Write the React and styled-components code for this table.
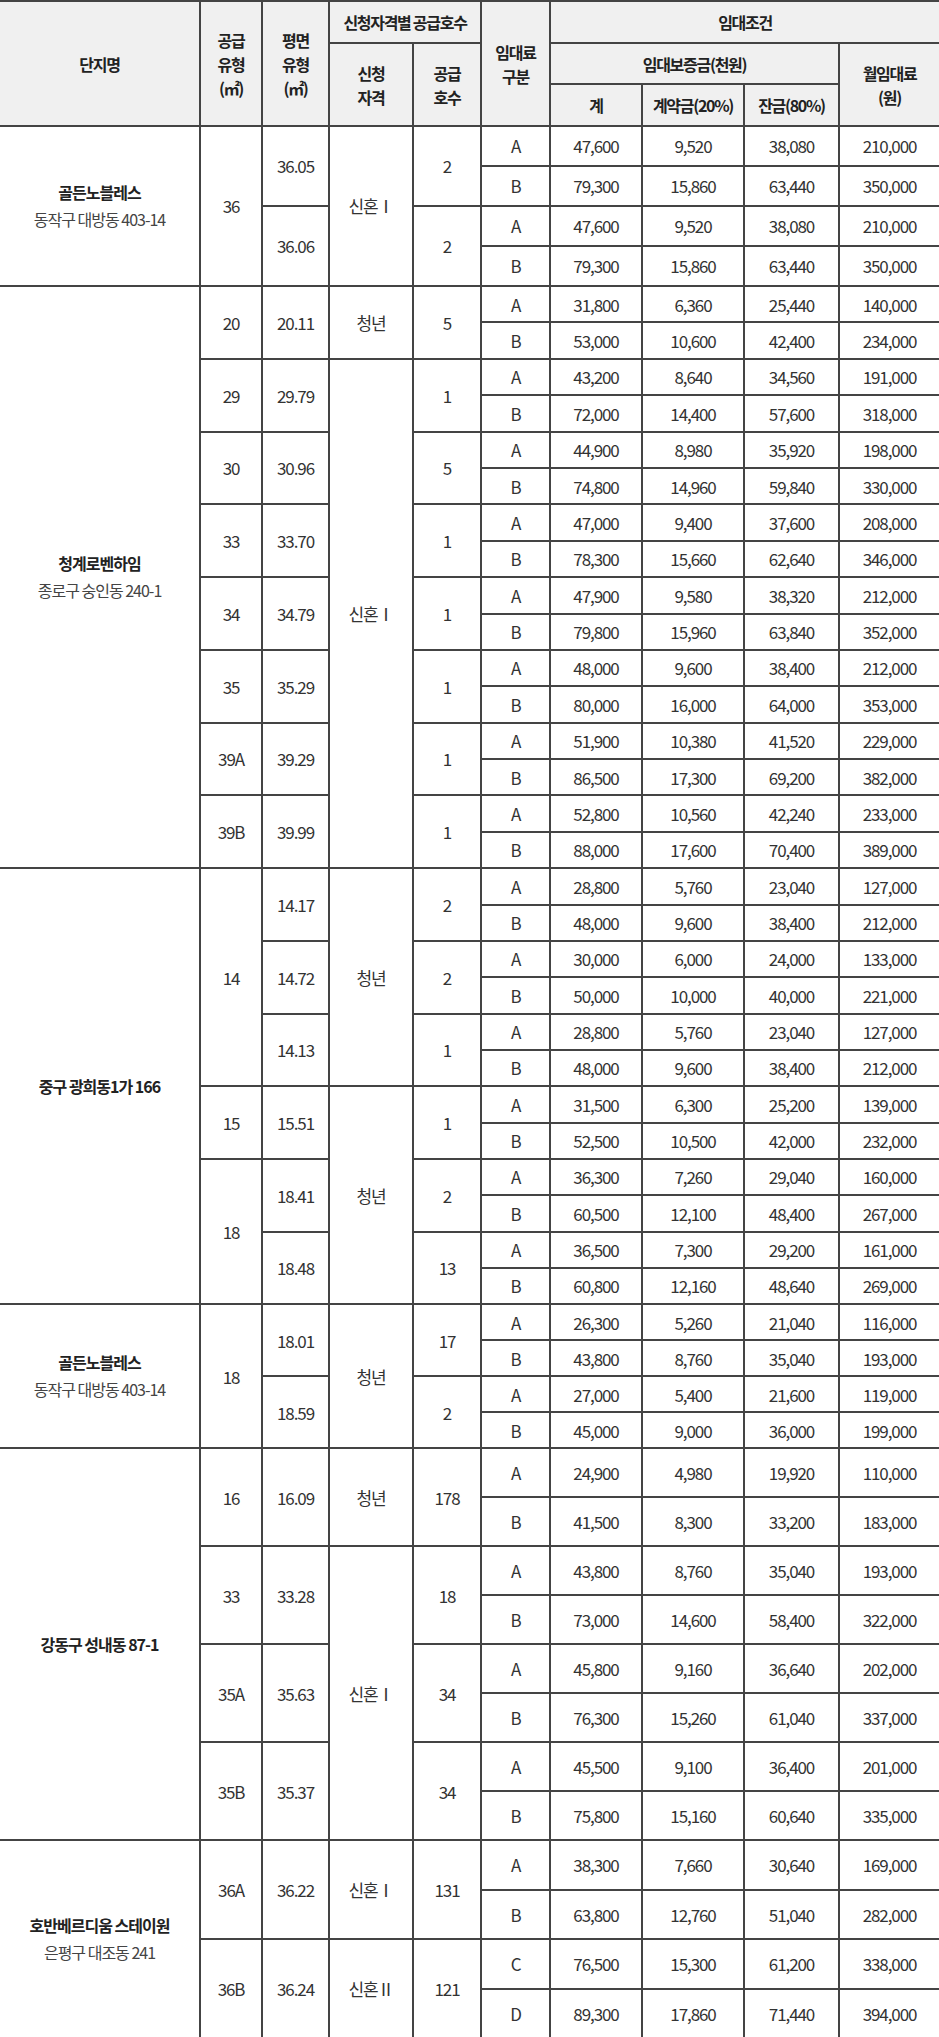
import React from 'react';
import styled, { createGlobalStyle } from 'styled-components';

const GlobalStyle = createGlobalStyle`
  body {
    margin: 0;
    background: #fff;
    font-family: "Noto Sans CJK KR", "Noto Sans", sans-serif;
  }
`;

const Table = styled.table`
  width: 939px;
  border-collapse: collapse;
  table-layout: fixed;
  color: #333;
  font-size: 17px;
  letter-spacing: -1.1px;
`;

const Row = styled.tr`
  height: ${p => p.$h}px;
`;

const Th = styled.th`
  background: #f0f0f0;
  border: 2px solid #444;
  ${p => p.$first && 'border-left: none;'}
  ${p => p.$last && 'border-right: none;'}
  padding: 0;
  font-size: 16px;
  font-weight: 700;
  line-height: 24px;
  letter-spacing: -1.3px;
  color: #222;
  text-align: center;
  vertical-align: middle;
`;

const Td = styled.td`
  border: 2px solid #444;
  ${p => p.$first && 'border-left: none;'}
  ${p => p.$last && 'border-right: none;'}
  padding: 0;
  text-align: center;
  vertical-align: middle;
  line-height: 1.25;
  white-space: nowrap;
`;

const Name = styled.div`
  font-weight: 700;
  font-size: 16px;
  color: #222;
  letter-spacing: -1px;
  line-height: 27px;
`;

const Addr = styled.div`
  font-size: 16px;
  color: #444;
  letter-spacing: -1px;
  line-height: 27px;
`;

const widths = [200, 62, 67, 84, 68, 69, 92, 102, 95, 100];

const r = (g, a, b, c, d) => [g, a, b, c, d];

const blocks = [
  {
    name: '골든노블레스', addr: '동작구 대방동 403-14', h: 40,
    plans: [
      { type: ['36', 2], plan: '36.05', qual: ['신혼Ⅰ', 2], count: '2',
        rents: [r('A', '47,600', '9,520', '38,080', '210,000'), r('B', '79,300', '15,860', '63,440', '350,000')] },
      { plan: '36.06', count: '2',
        rents: [r('A', '47,600', '9,520', '38,080', '210,000'), r('B', '79,300', '15,860', '63,440', '350,000')] },
    ],
  },
  {
    name: '청계로벤하임', addr: '종로구 숭인동 240-1', h: 36.4,
    plans: [
      { type: ['20', 1], plan: '20.11', qual: ['청년', 1], count: '5',
        rents: [r('A', '31,800', '6,360', '25,440', '140,000'), r('B', '53,000', '10,600', '42,400', '234,000')] },
      { type: ['29', 1], plan: '29.79', qual: ['신혼Ⅰ', 7], count: '1',
        rents: [r('A', '43,200', '8,640', '34,560', '191,000'), r('B', '72,000', '14,400', '57,600', '318,000')] },
      { type: ['30', 1], plan: '30.96', count: '5',
        rents: [r('A', '44,900', '8,980', '35,920', '198,000'), r('B', '74,800', '14,960', '59,840', '330,000')] },
      { type: ['33', 1], plan: '33.70', count: '1',
        rents: [r('A', '47,000', '9,400', '37,600', '208,000'), r('B', '78,300', '15,660', '62,640', '346,000')] },
      { type: ['34', 1], plan: '34.79', count: '1',
        rents: [r('A', '47,900', '9,580', '38,320', '212,000'), r('B', '79,800', '15,960', '63,840', '352,000')] },
      { type: ['35', 1], plan: '35.29', count: '1',
        rents: [r('A', '48,000', '9,600', '38,400', '212,000'), r('B', '80,000', '16,000', '64,000', '353,000')] },
      { type: ['39A', 1], plan: '39.29', count: '1',
        rents: [r('A', '51,900', '10,380', '41,520', '229,000'), r('B', '86,500', '17,300', '69,200', '382,000')] },
      { type: ['39B', 1], plan: '39.99', count: '1',
        rents: [r('A', '52,800', '10,560', '42,240', '233,000'), r('B', '88,000', '17,600', '70,400', '389,000')] },
    ],
  },
  {
    name: '중구 광희동1가 166', h: 36.33,
    plans: [
      { type: ['14', 3], plan: '14.17', qual: ['청년', 3], count: '2',
        rents: [r('A', '28,800', '5,760', '23,040', '127,000'), r('B', '48,000', '9,600', '38,400', '212,000')] },
      { plan: '14.72', count: '2',
        rents: [r('A', '30,000', '6,000', '24,000', '133,000'), r('B', '50,000', '10,000', '40,000', '221,000')] },
      { plan: '14.13', count: '1',
        rents: [r('A', '28,800', '5,760', '23,040', '127,000'), r('B', '48,000', '9,600', '38,400', '212,000')] },
      { type: ['15', 1], plan: '15.51', qual: ['청년', 3], count: '1',
        rents: [r('A', '31,500', '6,300', '25,200', '139,000'), r('B', '52,500', '10,500', '42,000', '232,000')] },
      { type: ['18', 2], plan: '18.41', count: '2',
        rents: [r('A', '36,300', '7,260', '29,040', '160,000'), r('B', '60,500', '12,100', '48,400', '267,000')] },
      { plan: '18.48', count: '13',
        rents: [r('A', '36,500', '7,300', '29,200', '161,000'), r('B', '60,800', '12,160', '48,640', '269,000')] },
    ],
  },
  {
    name: '골든노블레스', addr: '동작구 대방동 403-14', h: 36,
    plans: [
      { type: ['18', 2], plan: '18.01', qual: ['청년', 2], count: '17',
        rents: [r('A', '26,300', '5,260', '21,040', '116,000'), r('B', '43,800', '8,760', '35,040', '193,000')] },
      { plan: '18.59', count: '2',
        rents: [r('A', '27,000', '5,400', '21,600', '119,000'), r('B', '45,000', '9,000', '36,000', '199,000')] },
    ],
  },
  {
    name: '강동구 성내동 87-1', h: 49,
    plans: [
      { type: ['16', 1], plan: '16.09', qual: ['청년', 1], count: '178',
        rents: [r('A', '24,900', '4,980', '19,920', '110,000'), r('B', '41,500', '8,300', '33,200', '183,000')] },
      { type: ['33', 1], plan: '33.28', qual: ['신혼Ⅰ', 3], count: '18',
        rents: [r('A', '43,800', '8,760', '35,040', '193,000'), r('B', '73,000', '14,600', '58,400', '322,000')] },
      { type: ['35A', 1], plan: '35.63', count: '34',
        rents: [r('A', '45,800', '9,160', '36,640', '202,000'), r('B', '76,300', '15,260', '61,040', '337,000')] },
      { type: ['35B', 1], plan: '35.37', count: '34',
        rents: [r('A', '45,500', '9,100', '36,400', '201,000'), r('B', '75,800', '15,160', '60,640', '335,000')] },
    ],
  },
  {
    name: '호반베르디움 스테이원', addr: '은평구 대조동 241', h: 49.5,
    plans: [
      { type: ['36A', 1], plan: '36.22', qual: ['신혼Ⅰ', 1], count: '131',
        rents: [r('A', '38,300', '7,660', '30,640', '169,000'), r('B', '63,800', '12,760', '51,040', '282,000')] },
      { type: ['36B', 1], plan: '36.24', qual: ['신혼Ⅱ', 1], count: '121',
        rents: [r('C', '76,500', '15,300', '61,200', '338,000'), r('D', '89,300', '17,860', '71,440', '394,000')] },
    ],
  },
];

function RentCells({ rent }) {
  return rent.map((v, i) => (
    <Td key={i} $last={i === rent.length - 1}>{v}</Td>
  ));
}

function Block({ block }) {
  const total = block.plans.length * 2;
  const rows = [];
  block.plans.forEach((p, i) => {
    rows.push(
      <Row key={`${i}a`} $h={block.h}>
        {i === 0 && (
          <Td $first rowSpan={total}>
            <Name>{block.name}</Name>
            {block.addr && <Addr>{block.addr}</Addr>}
          </Td>
        )}
        {p.type && <Td rowSpan={p.type[1] * 2}>{p.type[0]}</Td>}
        <Td rowSpan={2}>{p.plan}</Td>
        {p.qual && <Td rowSpan={p.qual[1] * 2}>{p.qual[0]}</Td>}
        <Td rowSpan={2}>{p.count}</Td>
        <RentCells rent={p.rents[0]} />
      </Row>
    );
    rows.push(
      <Row key={`${i}b`} $h={block.h}>
        <RentCells rent={p.rents[1]} />
      </Row>
    );
  });
  return rows;
}

export default function App() {
  return (
    <>
      <GlobalStyle />
      <Table>
        <colgroup>
          {widths.map((w, i) => <col key={i} style={{ width: w }} />)}
        </colgroup>
        <thead>
          <Row $h={42}>
            <Th $first rowSpan={3}>단지명</Th>
            <Th rowSpan={3}>공급<br />유형<br />(㎡)</Th>
            <Th rowSpan={3}>평면<br />유형<br />(㎡)</Th>
            <Th colSpan={2}>신청자격별 공급호수</Th>
            <Th rowSpan={3}>임대료<br />구분</Th>
            <Th $last colSpan={4}>임대조건</Th>
          </Row>
          <Row $h={41}>
            <Th rowSpan={2}>신청<br />자격</Th>
            <Th rowSpan={2}>공급<br />호수</Th>
            <Th colSpan={3}>임대보증금(천원)</Th>
            <Th $last rowSpan={2}>월임대료<br />(원)</Th>
          </Row>
          <Row $h={42}>
            <Th>계</Th>
            <Th>계약금(20%)</Th>
            <Th>잔금(80%)</Th>
          </Row>
        </thead>
        <tbody>
          {blocks.map((b, i) => <Block key={i} block={b} />)}
        </tbody>
      </Table>
    </>
  );
}
